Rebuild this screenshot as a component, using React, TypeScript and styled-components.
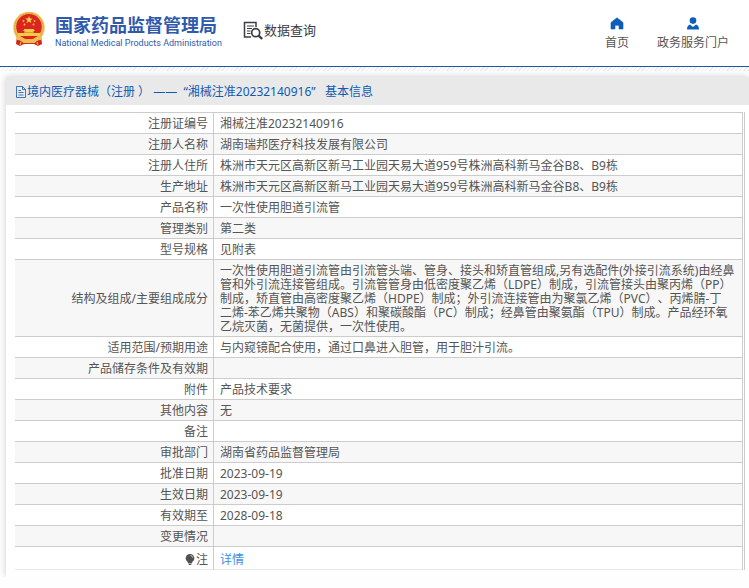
import React from "react";
import styled, { createGlobalStyle } from "styled-components";

const GlobalStyle = createGlobalStyle`
  * { box-sizing: border-box; }
  body {
    margin: 0;
    background: #fefefe;
    color: #555;
    font: 12px/14px "Noto Sans", "Noto Sans CJK SC", sans-serif;
    font-feature-settings: "chws" 0, "halt" 0;
    text-spacing-trim: space-all;
    overflow-x: hidden;
  }
`;

const Header = styled.header`
  display: flex;
  align-items: flex-start;
  height: 67px;
  padding: 0 20px 0 12px;
  background: #fff;
  border-bottom: 1px solid #1f57a4;
`;

const Brand = styled.a`
  display: flex;
  gap: 9px;
  margin-top: 11px;
  color: #2f5aac;
  text-decoration: none;
`;

const BrandText = styled.div`
  display: flex;
  flex-direction: column;
  white-space: nowrap;
`;

const BrandName = styled.strong`
  font: 700 18px/26px "Noto Sans CJK SC", sans-serif;
`;

const BrandSub = styled.span`
  font: 9px/12px Roboto, sans-serif;
`;

const Section = styled.div`
  display: flex;
  align-items: center;
  margin: 20px 0 0 20px;
  color: #3c3c44;
  font: 13px/20px "Noto Sans CJK SC", sans-serif;
  white-space: nowrap;
`;

const Nav = styled.nav`
  display: flex;
  gap: 28px;
  margin: 17px 0 0 auto;
`;

const NavLink = styled.a`
  display: flex;
  flex-direction: column;
  align-items: center;
  gap: 5px;
  color: #555;
  line-height: 16px;
  text-decoration: none;
  white-space: nowrap;
`;

const Hatch = styled.div`
  height: 4px;
  background: repeating-linear-gradient(135deg, #e6ebf2 0 1px, #fff 1px 3px);
`;

const Card = styled.main`
  margin: 6px 0 0 6px;
  padding-bottom: 7px;
  background: #fff;
  box-shadow: 0 0 7px rgba(0, 0, 0, 0.2);
`;

const Title = styled.h1`
  display: flex;
  align-items: center;
  height: 28px;
  margin: 0;
  padding: 2px 0 0 9px;
  background: #e9e9e9;
  color: #1159b3;
  font-size: 12px;
  font-weight: 400;
  white-space: pre;
`;

const TableFrame = styled.div`
  margin: 7px 4px 0 9px;
  border-right: 1px solid #ccc;
  padding-right: 1px;
`;

const Table = styled.table`
  width: 100%;
  border-collapse: separate;
  border-spacing: 0;
  border-top: 1px solid #ccc;
  border-right: 1px solid #ccc;
`;

const Label = styled.th`
  width: 199px;
  height: 21px;
  padding: 4px 5px 2px 0;
  border-right: 1px solid #ccc;
  font-weight: 400;
  text-align: right;
`;

const Value = styled.td`
  padding: 4px 6px 2px;
  white-space: pre-line;
`;

const Row = styled.tr`
  &:nth-child(even) { background: #f7f7f7; }
  & > * { border-bottom: 1px solid #ccc; }
  &:last-child > * {
    height: 23px;
    padding-top: 6px;
    border-bottom-color: #e8e8e8;
  }
`;

const DetailLink = styled.a`
  color: #3a8ee6;
  text-decoration: none;
`;

const NoteLabel = styled.span`
  display: flex;
  align-items: center;
  justify-content: flex-end;
  gap: 1px;
`;

const Emblem = () => (
  <svg width="34" height="36" viewBox="0 0 34 36" aria-hidden="true">
    <path d="M5 25 4 33l4 2 4-2h10l4 2 4-2-1-8z" fill="#d5221e" />
    <circle cx="17" cy="16.5" r="15.7" fill="#edbd50" />
    <circle cx="17" cy="16.5" r="14.3" fill="none" stroke="#d89631" strokeWidth=".7" strokeDasharray="2 1" />
    <circle cx="17" cy="15.8" r="12.8" fill="#db251f" />
    <path d="m17 5 1 2.6h2.8l-2.2 1.7.8 2.7-2.4-1.6-2.4 1.6.8-2.7-2.2-1.7H16z" fill="#f7d34e" />
    <g fill="#f5c94a">
      <circle cx="11.5" cy="10" r=".9" /><circle cx="22.5" cy="10" r=".9" />
      <circle cx="12.5" cy="13.5" r=".9" /><circle cx="21.5" cy="13.5" r=".9" />
      <path d="M12.5 18h9l1.5 2h-1.5v2H28v3H6v-3h6.5v-2H11z" />
    </g>
    <path d="M13 21.5h8" stroke="#cf7b28" strokeWidth=".6" />
    <path d="M4 25q7 0 9 4 4-2 8 0 2-4 9-4l-1 4q-5 0-6 3h-3l-3-1-3 1h-3q-1-3-6-3z" fill="#edbd50" />
    <path d="m9 31-1 3m17-3 1 3" fill="none" stroke="#e5a83d" strokeWidth="1.3" />
  </svg>
);

const SearchDocIcon = () => (
  <svg width="22" height="20" viewBox="0 0 22 20" fill="none" stroke="#3c3c44" aria-hidden="true">
    <path d="M14 7V2.5H2.5V17H9" strokeWidth="1.5" />
    <path d="M5 6h7M5 8.5h5M5 11h3.5M5 13.5h3.5" strokeWidth="1.2" />
    <circle cx="13.7" cy="12.7" r="4" fill="#fff" strokeWidth="1.7" />
    <path d="m16.6 15.6 3.6 3.4" strokeWidth="2.4" />
  </svg>
);

const HomeIcon = () => (
  <svg width="14" height="13" viewBox="0 0 14 13" fill="#0e5dbb" aria-hidden="true">
    <path d="M7 .8 1 5.5V12h4V8.3h4V12h4V5.5z" stroke="#0e5dbb" strokeWidth=".6" strokeLinejoin="round" />
  </svg>
);

const UserIcon = () => (
  <svg width="14" height="13" viewBox="0 0 14 13" fill="#0e5dbb" aria-hidden="true">
    <circle cx="7" cy="3.6" r="3.3" />
    <path d="M4 7.5 7 10l3-2.5c2 .6 3 2.2 3 5H1c0-2.8 1-4.4 3-5z" />
  </svg>
);

const FileIcon = () => (
  <svg width="12" height="12" viewBox="0 0 12 12" fill="none" stroke="#1159b3" aria-hidden="true">
    <path d="M1.5 .5h6l3 3v8h-9zM7.500 .5v3h3M3.500 4.500h2.500M3.500 6.500h5M3.500 9h5" strokeWidth=".8" />
  </svg>
);

const BulbIcon = () => (
  <svg width="10" height="12" viewBox="0 0 10 12" fill="#505050" aria-hidden="true">
    <path d="M5 0a4.300 4.300 0 0 1 2.500 7.800L7 9H3l-.5-1.200A4.300 4.300 0 0 1 5 0z" />
    <path d="M3.200 9.500h3.600L6 11H4z" />
    <path d="M5.500 1.500Q7.500 1.800 7.800 3.800" fill="none" stroke="#ddd" strokeWidth=".8" />
  </svg>
);

const address = "株洲市天元区高新区新马工业园天易大道959号株洲高科新马金谷B8、B9栋";

const records: [string, string][] = [
  ["注册证编号", "湘械注准20232140916"],
  ["注册人名称", "湖南瑞邦医疗科技发展有限公司"],
  ["注册人住所", address],
  ["生产地址", address],
  ["产品名称", "一次性使用胆道引流管"],
  ["管理类别", "第二类"],
  ["型号规格", "见附表"],
  [
    "结构及组成/主要组成成分",
    "一次性使用胆道引流管由引流管头端、管身、接头和矫直管组成,另有选配件(外接引流系统)由经鼻管和外引流连接管组成。引流管管身由低密度聚乙烯（LDPE）制成，引流管接头由聚丙烯（PP）制成，矫直管由高密度聚乙烯（HDPE）制成；外引流连接管由为聚氯乙烯（PVC）、丙烯腈-丁\n二烯-苯乙烯共聚物（ABS）和聚碳酸酯（PC）制成；经鼻管由聚氨酯（TPU）制成。产品经环氧\n乙烷灭菌，无菌提供，一次性使用。",
  ],
  ["适用范围/预期用途", "与内窥镜配合使用，通过口鼻进入胆管，用于胆汁引流。"],
  ["产品储存条件及有效期", ""],
  ["附件", "产品技术要求"],
  ["其他内容", "无"],
  ["备注", ""],
  ["审批部门", "湖南省药品监督管理局"],
  ["批准日期", "2023-09-19"],
  ["生效日期", "2023-09-19"],
  ["有效期至", "2028-09-18"],
  ["变更情况", ""],
];

export default function App() {
  return (
    <>
      <GlobalStyle />
      <Header>
        <Brand href="#">
          <Emblem />
          <BrandText>
            <BrandName lang="zh-CN">国家药品监督管理局</BrandName>
            <BrandSub>National Medical Products Administration</BrandSub>
          </BrandText>
        </Brand>
        <Section>
          <SearchDocIcon />
          数据查询
        </Section>
        <Nav>
          <NavLink href="#"><HomeIcon />首页</NavLink>
          <NavLink href="#"><UserIcon />政务服务门户</NavLink>
        </Nav>
      </Header>
      <Hatch />
      <Card lang="zh-CN">
        <Title>
          <FileIcon />
          {"境内医疗器械（注册 ） ——  “湘械注准20232140916”   基本信息"}
        </Title>
        <TableFrame>
          <Table>
            <tbody>
              {records.map(([label, value]) => (
                <Row key={label}>
                  <Label scope="row">{label}</Label>
                  <Value>{value}</Value>
                </Row>
              ))}
              <Row>
                <Label scope="row"><NoteLabel><BulbIcon />注</NoteLabel></Label>
                <Value><DetailLink href="#">详情</DetailLink></Value>
              </Row>
            </tbody>
          </Table>
        </TableFrame>
      </Card>
    </>
  );
}
